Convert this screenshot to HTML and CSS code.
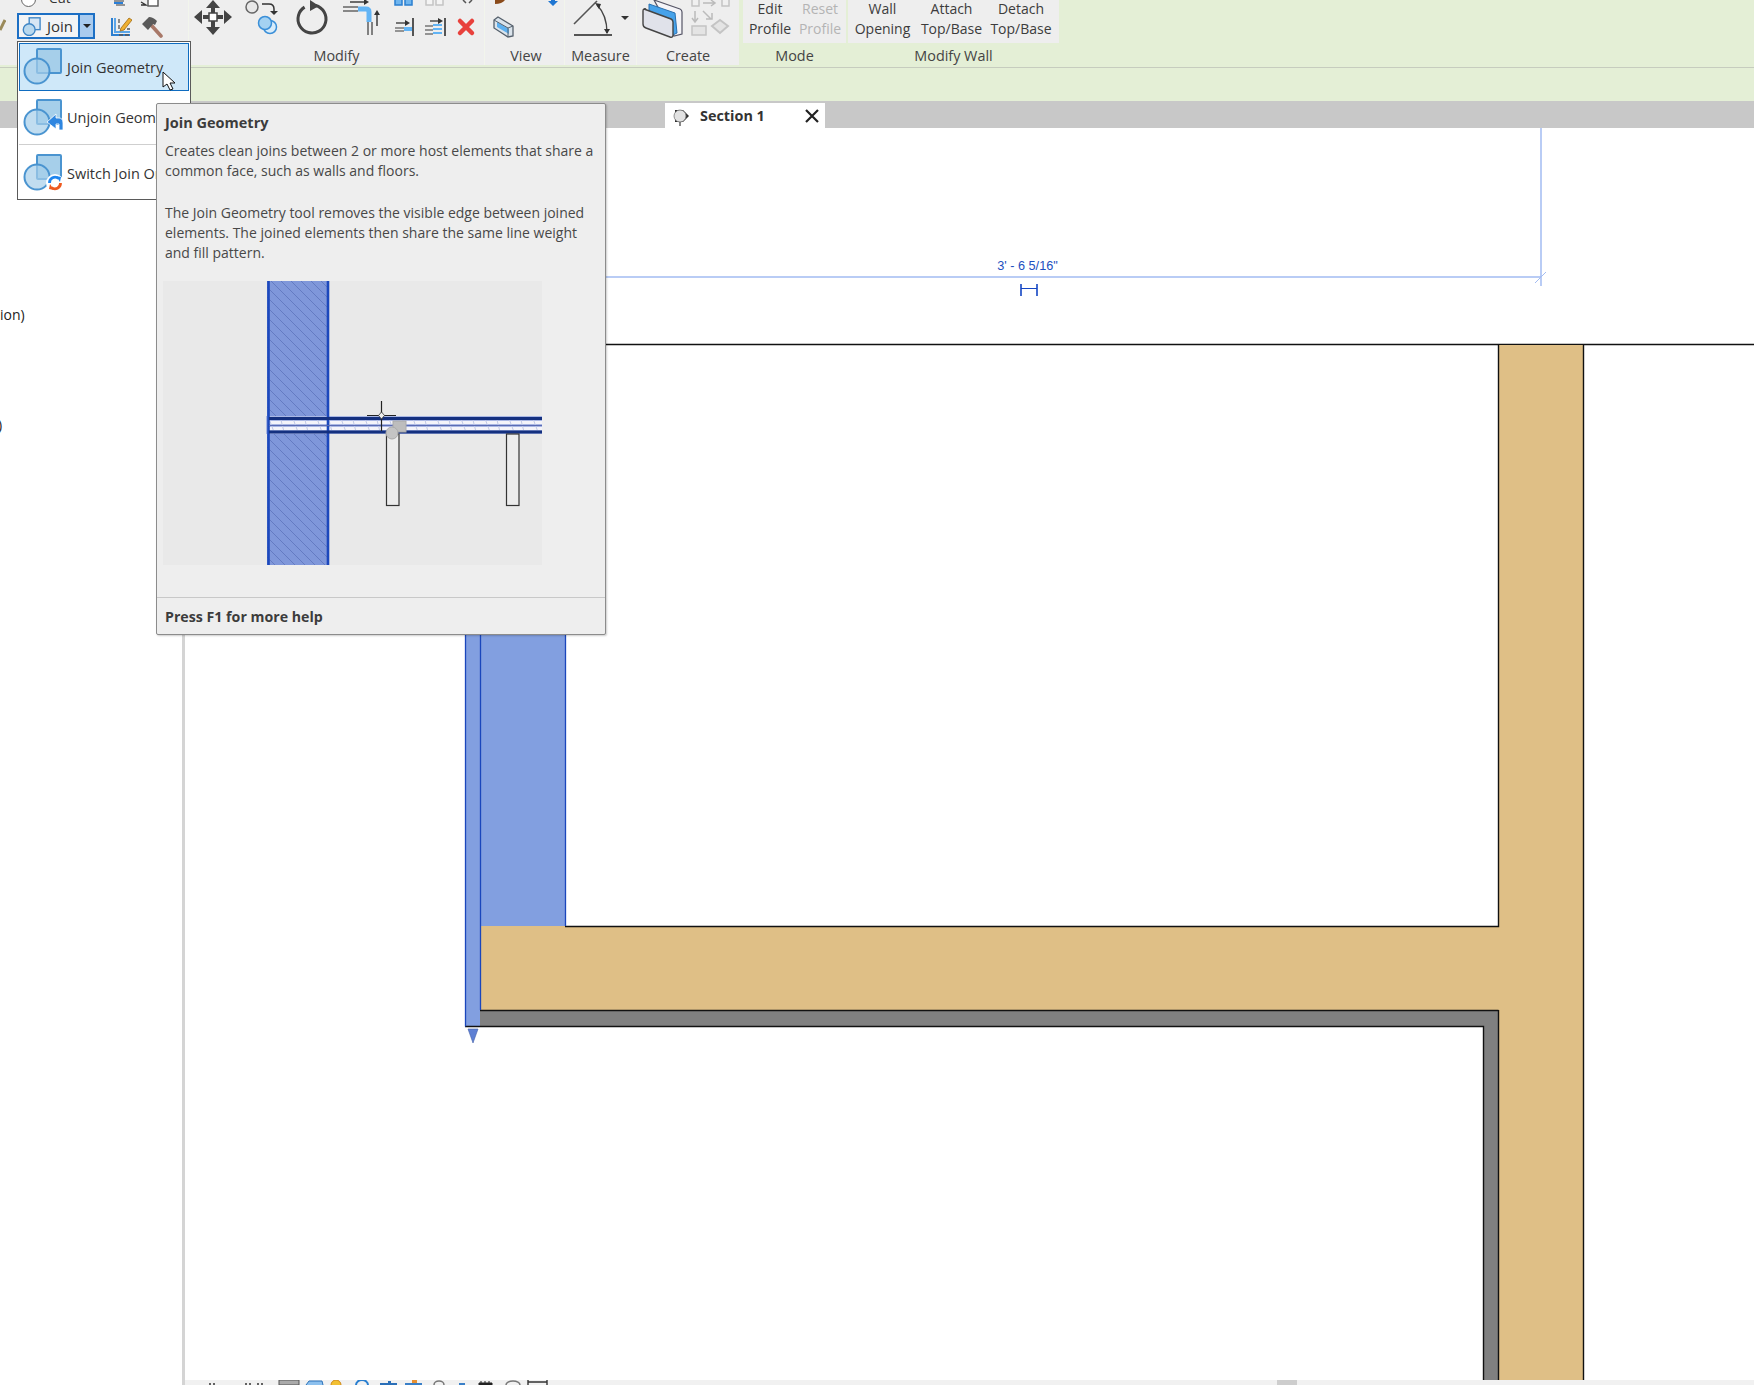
FILE: index.html
```html
<!DOCTYPE html>
<html lang="en">
<head>
<meta charset="utf-8">
<title>Join Geometry</title>
<link rel="stylesheet" href="styles.css">
</head>
<body>
<div class="app">
  <header class="ribbon">
    <section class="panel p-geom">
      <div class="panel-top">
        <div class="cut-row">
          <span class="cut-dot"></span><span class="cut-label">Cut</span>
          <svg class="cut-icons" width="60" height="13" viewBox="110 0 60 13">
            <path d="M114 1h10M116 5h9" stroke="#777" stroke-width="1.5" fill="none"/>
            <path d="M114 3h9" stroke="#2a7fd8" stroke-width="2" fill="none"/>
            <path d="M141 2l5 3h-5" stroke="#333" stroke-width="1.4" fill="none"/>
            <rect x="148" y="-3" width="10" height="9" fill="#fff" stroke="#555" stroke-width="1.4"/>
          </svg>
        </div>
        <div class="join-row">
          <svg class="sliver" width="6" height="14" viewBox="0 0 6 14"><path d="M0 12L5 2" stroke="#9a8a5a" stroke-width="3"/></svg>
          <div class="split-btn">
            <div class="split-main">
              <svg width="20" height="20" viewBox="20 15 20 22">
                <rect x="28" y="17" width="12" height="13" fill="#d6e6f4" stroke="#3f86c6" stroke-width="1.5"/>
                <circle cx="28" cy="30" r="6.500" fill="#b8d8ee" stroke="#3f86c6" stroke-width="1.5"/>
              </svg>
              <span>Join</span>
            </div>
            <div class="split-caret"></div>
          </div>
          <svg class="small-tool" width="22" height="22" viewBox="109 16 22 22">
            <path d="M111 18v17h18" fill="none" stroke="#2d7fd0" stroke-width="2"/>
            <path d="M114 18v14h15" fill="none" stroke="#5aa5e8" stroke-width="2"/>
            <path d="M118 19v10h11M118 35h11" fill="none" stroke="#555" stroke-width="1.3" stroke-dasharray="4 2"/>
            <path d="M120 28l8-10 3 2-8 10-4 1z" fill="#f0b030" stroke="#a06a10" stroke-width=".8"/>
          </svg>
          <svg class="small-tool hammer" width="22" height="22" viewBox="140 16 22 22">
            <path d="M151 26l9 10" stroke="#a87868" stroke-width="3.600" stroke-linecap="round"/>
            <path d="M141 24l7-7q4 0 8 4l-2 4-2-1-5 6z" fill="#5a5a5a"/>
          </svg>
        </div>
      </div>
      <div class="panel-label"></div>
    </section>

    <section class="panel p-modify">
      <div class="panel-top">
        <svg class="strip" width="296" height="44" viewBox="189 0 296 44">
          <g fill="#444">
            <rect x="203" y="15" width="20" height="4"/><rect x="211" y="7" width="4" height="20"/>
            <path d="M213 0l-7 8h14zM213 35l-7-8h14zM194 17l8-7v14zM232 17l-8-7v14z"/>
          </g>
          <rect x="209" y="13" width="8" height="8" fill="#fff" stroke="#444" stroke-width="1.5"/>
          <circle cx="252" cy="7" r="6" fill="#e8e8e8" stroke="#666" stroke-width="1.5"/>
          <path d="M262 4h7q5 0 5 5v3" fill="none" stroke="#333" stroke-width="1.5"/>
          <path d="M270 11h8l-4 4z" fill="#333"/>
          <circle cx="270" cy="27" r="6.500" fill="#d8ecfa" stroke="#3a8fd8" stroke-width="1.5"/>
          <circle cx="265" cy="23" r="6.500" fill="#a4d2f2" stroke="#3a8fd8" stroke-width="1.5"/>
          <circle cx="312" cy="19" r="14" fill="none" stroke="#444" stroke-width="3" stroke-dasharray="76 12" transform="rotate(-75 312 19)"/>
          <path d="M310 0l9 6-9 5z" fill="#444"/>
          <path d="M343 7h15M343 11h15" stroke="#666" stroke-width="1.6"/>
          <path d="M350 2h15" stroke="#333" stroke-width="1.4"/><path d="M364 -1l5 3-5 3z" fill="#333"/>
          <path d="M358 9h8q3 0 3 3v10" fill="none" stroke="#62b4f5" stroke-width="5"/>
          <path d="M368 22v13M372 22v13" stroke="#666" stroke-width="1.6"/>
          <path d="M377 26v-12" stroke="#333" stroke-width="1.4"/><path d="M374 15l3-5 3 5z" fill="#333"/>
          <rect x="395" y="-4" width="7" height="9" fill="#6fb5ee" stroke="#2a7fd0" stroke-width="1.5"/>
          <rect x="405" y="-4" width="7" height="9" fill="#6fb5ee" stroke="#2a7fd0" stroke-width="1.5"/>
          <rect x="426" y="-4" width="7" height="9" fill="#f4f4f4" stroke="#c4c4c4" stroke-width="1.5"/>
          <rect x="436" y="-4" width="7" height="9" fill="#f4f4f4" stroke="#c4c4c4" stroke-width="1.5"/>
          <path d="M396 23h10" stroke="#333" stroke-width="1.3"/><path d="M405 20l5 3-5 3z" fill="#333"/>
          <path d="M395 28h9M395 31h9" stroke="#777" stroke-width="1.6"/>
          <rect x="404" y="27" width="9" height="4" fill="#62b4f5"/>
          <path d="M413 18v18" stroke="#555" stroke-width="2"/>
          <path d="M430 21h9" stroke="#333" stroke-width="1.3"/><path d="M438 18l5 3-5 3z" fill="#333"/>
          <path d="M425 26h8M425 30h8M425 34h8" stroke="#777" stroke-width="1.6"/>
          <path d="M433 25h9M433 29h9M433 33h9" stroke="#62b4f5" stroke-width="2"/>
          <path d="M445 18v18" stroke="#555" stroke-width="2"/>
          <path d="M460 21l12 12M472 21l-12 12" stroke="#e8413c" stroke-width="4.500" stroke-linecap="round"/>
          <path d="M463 0l3 3M472 0l-3 3" stroke="#555" stroke-width="1.5"/>
        </svg>
      </div>
      <div class="panel-label">Modify</div>
    </section>

    <section class="panel p-view">
      <div class="panel-top">
        <svg class="strip" width="80" height="44" viewBox="485 0 80 44">
          <path d="M495 4q7 0 10-4h-10z" fill="#8a4a1a"/>
          <path d="M494 20l4-3 15 9v10l-5 1-14-9z" fill="#dbe4ec" stroke="#55606c" stroke-width="1.3"/>
          <path d="M497 22l12 7v5l-12-7z" fill="#5db0f0"/>
          <path d="M494 20l14 8v9M508 28l5-2" fill="none" stroke="#55606c" stroke-width="1"/>
          <path d="M553 6l-5-5h3v-2h4v2h3z" fill="#1f76d2"/>
        </svg>
      </div>
      <div class="panel-label label-view">View</div>
    </section>

    <section class="panel p-measure">
      <div class="panel-top">
        <svg class="strip" width="72" height="44" viewBox="565 0 72 44">
          <path d="M574 24L597 1" stroke="#555" stroke-width="1.6" fill="none"/>
          <path d="M574 35h38" stroke="#555" stroke-width="2" fill="none"/>
          <path d="M597 5q10 10 10 28" stroke="#444" stroke-width="1.4" fill="none"/>
          <path d="M595 3l6 1-2 5zM604 29h6l-3 5z" fill="#333"/>
          <path d="M621 16h8l-4 4z" fill="#333"/>
        </svg>
      </div>
      <div class="panel-label">Measure</div>
    </section>

    <section class="panel p-create">
      <div class="panel-top">
        <svg class="strip" width="102" height="44" viewBox="637 0 102 44">
          <path d="M654 0l26 9q2 1 2 3v22l-8 2z" fill="#f4f4f8" stroke="#556" stroke-width="1.2"/>
          <path d="M649 4l26 9 2 20-4 2-24-8z" fill="#46a2ea" stroke="#2a70b0" stroke-width="1"/>
          <path d="M644 9l27 10q2 1 2 3v13q0 3-3 2l-24-9q-3-1-3-4V11q0-3 3-2z" fill="#e0e2ea" stroke="#444" stroke-width="1.4"/>
          <g fill="#f0f0f0" stroke="#c4c4c4" stroke-width="1.5">
            <rect x="692" y="-2" width="7" height="8"/>
            <rect x="722" y="-2" width="7" height="8"/>
            <rect x="692" y="26" width="14" height="9" fill="#e4e4e4"/>
            <path d="M720 20l8 6-8 7-8-7z" fill="#e4e4e4" stroke-width="2"/>
          </g>
          <path d="M703 3h11M711 0l4 3-4 3M695 11v10M692 18l3 4 3-4M703 11l8 8M706 19h6v-6" fill="none" stroke="#bbb" stroke-width="1.5"/>
        </svg>
      </div>
      <div class="panel-label">Create</div>
    </section>

    <section class="panel ctx p-mode">
      <div class="panel-top btns">
        <div class="rb-btn w50">Edit<br>Profile</div>
        <div class="rb-btn w50 off">Reset<br>Profile</div>
      </div>
      <div class="panel-label">Mode</div>
    </section>

    <section class="panel ctx p-wall">
      <div class="panel-top btns">
        <div class="rb-btn w69">Wall<br>Opening</div>
        <div class="rb-btn w69">Attach<br>Top/Base</div>
        <div class="rb-btn w70">Detach<br>Top/Base</div>
      </div>
      <div class="panel-label">Modify Wall</div>
    </section>
  </header>

  <div class="options-bar"></div>

  <nav class="tab-strip">
    <div class="tab">
      <svg class="tab-icon" width="18" height="20" viewBox="0 0 18 20">
        <path d="M3 4h8l6 6-6 6H3z" fill="#2c2c2c"/>
        <circle cx="8" cy="10" r="6" fill="#e2e2e2" stroke="#777" stroke-width=".8"/>
        <path d="M8 16v4" stroke="#555" stroke-width="1.4"/>
      </svg>
      <span class="tab-title">Section 1</span>
      <svg class="tab-close" width="14" height="14" viewBox="0 0 14 14"><path d="M1 1l12 12M13 1L1 13" stroke="#222" stroke-width="2.200"/></svg>
    </div>
  </nav>

  <main class="workspace">
    <aside class="browser">
      <div class="browser-a">ion)</div>
      <div class="browser-b">)</div>
    </aside>
    <div class="view-col">
      <div class="canvas">
        <svg class="drawing" width="1569" height="1252" viewBox="185 128 1569 1252">
          <path d="M600 277H1541M1541 128V286" stroke="#a3bcf2" stroke-width="1.5" fill="none"/>
          <path d="M1535 283l11-11" stroke="#a3bcf2" stroke-width="1"/>
          <text class="dim" x="1027.500" y="270" text-anchor="middle">3' - 6 5/16"</text>
          <path d="M1021 284v12M1037 284v12" stroke="#1546c4" stroke-width="1.6"/>
          <path d="M1021 288.500h16" stroke="#1546c4" stroke-width="1"/>
          <path d="M460 344.500H1754" stroke="#111" stroke-width="1.4"/>
          <rect x="481" y="344" width="84" height="582" fill="#829fe0"/>
          <rect x="465" y="344" width="16" height="683" fill="#829fe0"/>
          <rect x="480" y="926" width="1018" height="84" fill="#dfbf86"/>
          <rect x="1498" y="345" width="85" height="1035" fill="#dfbf86"/>
          <rect x="480" y="1010" width="1018" height="16" fill="#808080"/>
          <rect x="1483" y="1010" width="15" height="370" fill="#808080"/>
          <path d="M565 926.500H1498.500V345M1583.500 345V1380M1498.500 1010V1380M480 1010.500H1498.500M465 1026.500H1483.500V1380" fill="none" stroke="#111" stroke-width="1.4"/>
          <path d="M465.500 344V1026.500M480.500 344V1010M565.500 344V926" fill="none" stroke="#1a46bc" stroke-width="1.3"/>
          <path d="M468 1029h10l-5 14z" fill="#5e80d4" stroke="#4462aa" stroke-width=".6"/>
        </svg>
      </div>
      <div class="status-bar">
        <svg class="status-icons" width="1569" height="5" viewBox="185 0 1569 5">
          <path d="M210 3v2M214 3v2M246 3v2M250 3v2M258 3v2M262 3v2" stroke="#333" stroke-width="1.5"/>
          <rect x="279" y="0" width="20" height="5" fill="#aaa" stroke="#555"/>
          <path d="M306 5l3-4h13l1 4" fill="#8cc0ee" stroke="#2a70b8"/>
          <circle cx="336" cy="5" r="5" fill="#f2c032" stroke="#d08818"/>
          <path d="M356 5a6 5 0 0 1 12 0" fill="none" stroke="#2a7fd0" stroke-width="2"/>
          <path d="M380 3h17v2h-17zM388 1h3v2h-3z" fill="#2a6fb8"/>
          <path d="M405 3h17v2h-17z" fill="#3a80c8"/><path d="M412 0h5v3h-5z" fill="#e89030"/>
          <path d="M434 5a5 4 0 0 1 10 0" fill="none" stroke="#777" stroke-width="1.5"/>
          <path d="M459 3h6v2h-6z" fill="#3a80c8"/>
          <path d="M479 3h13v2h-13zM481 1v2M485 1v2M489 1v2" fill="#222" stroke="#222"/>
          <path d="M506 5a7 4 0 0 1 14 0" fill="none" stroke="#777" stroke-width="1.5"/>
          <path d="M528 0v5M547 0v5M528 2h19" fill="none" stroke="#333" stroke-width="1.4"/>
        </svg>
        <div class="scroll-thumb"></div>
      </div>
    </div>
  </main>

  <div class="flyout">
    <div class="fly-item selected">
      <svg class="fly-icon" width="42" height="40" viewBox="0 0 42 40">
        <rect x="15" y="2" width="24" height="24" rx="1" fill="#a6cfea" stroke="#4a94d0" stroke-width="2"/>
        <circle cx="15" cy="24" r="12.500" fill="#a6cfea" fill-opacity=".7" stroke="#4a94d0" stroke-width="2"/>
      </svg>
      <span>Join Geometry</span>
    </div>
    <div class="fly-item second">
      <svg class="fly-icon" width="42" height="40" viewBox="0 0 42 40">
        <rect x="15" y="2" width="24" height="24" rx="1" fill="#a6cfea" stroke="#4a94d0" stroke-width="2"/>
        <circle cx="15" cy="24" r="12.500" fill="#a6cfea" fill-opacity=".7" stroke="#4a94d0" stroke-width="2"/>
        <path d="M25 24l9-8v4h3q4 0 4 5v7h-4v-6h-3v5z" fill="#2f86e0" stroke="#fff" stroke-width=".8"/>
      </svg>
      <span>Unjoin Geometry</span>
    </div>
    <div class="fly-item third">
      <svg class="fly-icon" width="42" height="40" viewBox="0 0 42 40">
        <rect x="15" y="2" width="24" height="24" rx="1" fill="#a6cfea" stroke="#4a94d0" stroke-width="2"/>
        <circle cx="15" cy="24" r="12.500" fill="#a6cfea" fill-opacity=".7" stroke="#4a94d0" stroke-width="2"/>
        <circle cx="33" cy="30" r="9" fill="#fff"/>
        <path d="M27.500 30a5.500 5.500 0 0 1 9-4.500" fill="none" stroke="#1f86ee" stroke-width="2.800"/>
        <path d="M34 23l5 1-1 5z" fill="#1f86ee"/>
        <path d="M38.500 30a5.500 5.500 0 0 1-9 4.500" fill="none" stroke="#ee5a20" stroke-width="2.800"/>
        <path d="M32 37l-5-1 1-5z" fill="#ee5a20"/>
      </svg>
      <span>Switch Join Order</span>
    </div>
  </div>

  <svg class="cursor" width="14" height="20" viewBox="0 0 14 20">
    <path d="M1 1v15l4-3 3 6 3-1-3-6h5z" fill="#fff" stroke="#111" stroke-width="1"/>
  </svg>

  <div class="tooltip">
    <h2 class="tip-title">Join Geometry</h2>
    <p class="tip-text">Creates clean joins between 2 or more host elements that share a<br>common face, such as walls and floors.</p>
    <p class="tip-text gap">The Join Geometry tool removes the visible edge between joined<br>elements. The joined elements then share the same line weight<br>and fill pattern.</p>
    <svg class="tip-image" width="379" height="284" viewBox="163 281 379 284">
      <defs>
        <pattern id="hatch" patternUnits="userSpaceOnUse" width="10" height="10">
          <path d="M0 0L10 10M-5 5L5 15M5-5L15 5" stroke="#5d74bd" stroke-width=".8"/>
        </pattern>
        <pattern id="stripe" patternUnits="userSpaceOnUse" width="24" height="16">
          <path d="M4 0l6 16M16 0l4 16" stroke="#c0c8e6" stroke-width="1"/>
        </pattern>
      </defs>
      <rect x="163" y="281" width="379" height="284" fill="#e9e9e9"/>
      <rect x="267" y="281" width="62" height="284" fill="#7f97da"/>
      <rect x="267" y="281" width="62" height="284" fill="url(#hatch)"/>
      <rect x="266" y="416" width="276" height="18" fill="#a9b7e4"/>
      <rect x="269" y="421" width="273" height="3" fill="#f4f4fa"/>
      <rect x="269" y="427" width="273" height="3" fill="#f4f4fa"/>
      <rect x="269" y="420" width="273" height="10" fill="url(#stripe)"/>
      <path d="M268.500 281V565M328 281V565" stroke="#1c48bc" stroke-width="2.600"/>
      <path d="M269 418.500H542M269 432H542" stroke="#14307f" stroke-width="3"/>
      <path d="M269 425.500H542" stroke="#5b6cb4" stroke-width="1.2"/>
      <rect x="386.500" y="434" width="12.500" height="71.500" fill="#ececec" stroke="#333" stroke-width="1.2"/>
      <rect x="506.500" y="434" width="12.500" height="71.500" fill="#ececec" stroke="#333" stroke-width="1.2"/>
      <path d="M367 415.500H396M381.500 401V431" stroke="#222" stroke-width="1.2"/>
      <path d="M381.500 412l3 3.500-3 3.500-3-3.500z" fill="#eee" stroke="#333" stroke-width=".8"/>
      <rect x="393" y="421" width="13" height="11" fill="#bdbdbd" stroke="#aaa"/>
      <circle cx="392" cy="433" r="6" fill="#c4c4c4" stroke="#aaa"/>
    </svg>
    <div class="tip-footer">Press F1 for more help</div>
  </div>
</div>
</body>
</html>
```

FILE: styles.css
```css
* { box-sizing: border-box; }
html, body { margin: 0; height: 100%; overflow: hidden; background: #fff; }
body { font-family: "Open Sans", "Noto Sans", "Liberation Sans", sans-serif; color: #333; }
svg { display: block; }

.app { position: relative; display: flex; flex-direction: column; width: 1754px; height: 1385px; overflow: hidden; }

/* ribbon */
.ribbon { display: flex; flex: none; height: 68px; background: #e4efd6; border-bottom: 1px solid #c6ccbe; }
.panel { display: flex; flex-direction: column; flex: none; height: 65px; background: #eeeeee; border-right: 1px solid #f2f5ec; }
.panel-top { height: 43px; flex: none; overflow: hidden; }
.panel-label { height: 22px; line-height: 26px; text-align: center; font-size: 14.4px; color: #444; white-space: nowrap; }
.label-view { padding-left: 3px; }
.strip { margin-bottom: -1px; }
.p-geom { width: 189px; }
.p-modify { width: 296px; }
.p-view { width: 80px; }
.p-measure { width: 72px; }
.p-create { width: 102px; margin-right: 4px; border-right: 0; }
.p-mode { width: 103px; margin-right: 2px; }
.p-wall { width: 211px; }
.ctx { border-right: 0; }
.ctx .panel-label { background: #e4efd6; }
.btns { display: flex; padding-left: 2px; }
.p-wall .btns { padding-left: 0; }
.rb-btn { margin-top: -1px; text-align: center; font-size: 14px; line-height: 20px; color: #3c3c3c; white-space: nowrap; }
.rb-btn.off { color: #b4b4b4; }
.w50 { width: 50px; }
.w69 { width: 69px; }
.w70 { width: 70px; }

.cut-row { position: relative; display: flex; align-items: center; height: 13px; overflow: hidden; }
.cut-dot { width: 15px; height: 15px; margin: -14px 0 0 21px; border: 1.5px solid #666; border-radius: 50%; background: #fff; flex: none; }
.cut-label { margin: -18px 0 0 13px; font-size: 13.5px; width: 61px; flex: none; }
.cut-icons { flex: none; }
.join-row { display: flex; align-items: flex-start; height: 30px; }
.sliver { margin-top: 5px; margin-right: 11px; flex: none; }
.split-btn { display: flex; width: 78px; height: 26px; border: 2px solid #1c6fc4; flex: none; }
.split-main { display: flex; align-items: center; width: 61px; padding-left: 2px; gap: 6px; font-size: 15px; color: #333; background: #f2f4f6; border-right: 2px solid #1c6fc4; }
.split-caret { position: relative; flex: 1; background: #a9cbee; }
.split-caret::after { content: ""; position: absolute; left: 3px; top: 9px; border: 4px solid transparent; border-top: 4px solid #222; border-bottom: 0; }
.small-tool { margin: 3px 0 0 15px; flex: none; }
.hammer { margin-left: 9px; }

.options-bar { flex: none; height: 33px; background: #e4efd6; }

/* tabs */
.tab-strip { display: flex; flex: none; height: 27px; padding: 2px 0 0 665px; background: #c8c8c8; }
.tab { display: flex; align-items: center; width: 160px; background: #fff; padding-left: 7px; }
.tab-title { margin-left: 10px; width: 104px; font-size: 14.4px; font-weight: 700; color: #333; flex: none; }
.tab-icon { flex: none; }
.tab-close { flex: none; margin-left: 1px; }

/* workspace */
.workspace { display: flex; flex: 1; min-height: 0; }
.browser { flex: none; width: 185px; background: #fff; border-right: 3px solid #d4d4d4; font-size: 14px; color: #222; overflow: hidden; }
.browser-a { margin-top: 177px; line-height: 20px; }
.browser-b { margin: 90px 0 0 -2px; line-height: 20px; }
.view-col { flex: 1; display: flex; flex-direction: column; min-width: 0; }
.canvas { flex: 1; min-height: 0; background: #fff; overflow: hidden; }
.dim { font: 12.7px "Liberation Sans", Arial, sans-serif; fill: #1c4fc0; }
.status-bar { position: relative; flex: none; height: 5px; background: #f1f1f1; overflow: hidden; }
.scroll-thumb { position: absolute; left: 1092px; top: 0; width: 20px; height: 5px; background: #cdcdcd; }

/* overlays */
.flyout { position: absolute; left: 17px; top: 41px; width: 174px; height: 159px; padding: 1px; background: #fff; border: 1px solid #5a5a5a; z-index: 2; }
.fly-item { display: flex; align-items: center; font-size: 14.5px; color: #333; white-space: nowrap; }
.fly-item .fly-icon { flex: none; margin: 0 3px 0 2px; }
.fly-item.selected { height: 48px; background: #cfe8f9; border: 1.5px solid #0f6cc0; }
.fly-item.second { height: 54px; border-bottom: 1px solid #cfcfcf; padding-left: 1px; }
.fly-item.third { height: 52px; padding: 4px 0 0 1px; }
.cursor { position: absolute; left: 162px; top: 71px; z-index: 3; }

.tooltip { position: absolute; left: 156px; top: 103px; width: 450px; height: 532px; display: flex; flex-direction: column; background: #eeeeee; border: 1px solid #8c8c8c; border-radius: 2px; box-shadow: 1px 1px 2px rgba(0,0,0,.2); z-index: 4; color: #484848; }
.tip-title { margin: 9px 0 8px 8px; font-size: 14.5px; line-height: 20px; font-weight: 700; color: #3c3c3c; }
.tip-text { margin: 0 0 0 8px; font-size: 14px; line-height: 20.3px; white-space: nowrap; }
.tip-text.gap { margin-top: 21px; }
.tip-image { margin: 17.500px 0 0 6px; flex: none; }
.tip-footer { margin-top: auto; height: 37px; border-top: 1px solid #c8c8c8; padding: 9px 0 0 8px; font-size: 14.2px; line-height: 20px; font-weight: 700; color: #3c3c3c; }
```
